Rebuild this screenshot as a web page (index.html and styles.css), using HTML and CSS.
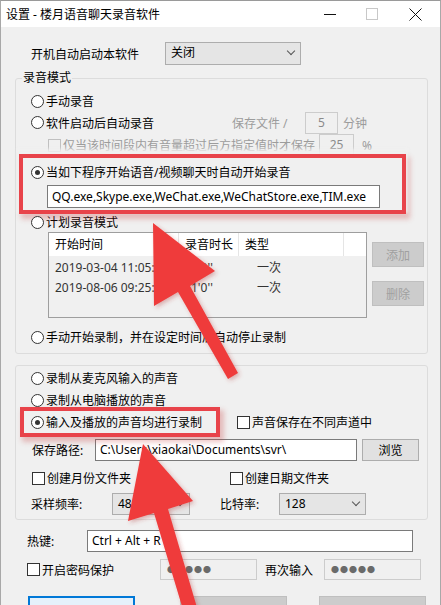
FILE: index.html
```html
<!DOCTYPE html>
<html>
<head>
<meta charset="utf-8">
<title>设置 - 楼月语音聊天录音软件</title>
<link rel="stylesheet" href="styles.css">
</head>
<body>
<div class="window">
  <div class="titlebar">
    <span class="title">设置 - 楼月语音聊天录音软件</span>
    <span class="cap cap-min"></span>
    <span class="cap cap-max"></span>
    <span class="cap cap-close">
      <svg width="13" height="13" viewBox="0 0 13 13"><path d="M0.5 0.5 L12.5 12.5 M12.5 0.5 L0.5 12.5" stroke="#111" stroke-width="1" fill="none"/></svg>
    </span>
  </div>

  <div class="client">
    <div class="row row-auto">
      <span class="lbl-auto">开机自动启动本软件</span>
      <div class="combo combo-auto">关闭<i class="chev"></i></div>
    </div>

    <fieldset class="group group-mode">
      <legend>录音模式</legend>
      <div class="opt opt-first"><span class="radio"></span>手动录音</div>
      <div class="opt opt-save">
        <span class="radio"></span><span class="txt-auto">软件启动后自动录音</span>
        <span class="gray save-lbl">保存文件 /</span>
        <span class="edit edit-dis edit-min">5</span>
        <span class="gray unit">分钟</span>
      </div>
      <div class="opt opt-check">
        <span class="check check-dis"></span><span class="gray txt-only">仅当该时间段内有音量超过后方指定值时才保存</span>
        <span class="edit edit-dis edit-pct">25</span>
        <span class="gray pct">%</span>
      </div>
      <div class="mark mark-chat">
        <div class="opt opt-in"><span class="radio on"></span>当如下程序开始语音/视频聊天时自动开始录音</div>
        <div class="edit edit-apps">QQ.exe,Skype.exe,WeChat.exe,WeChatStore.exe,TIM.exe</div>
      </div>
      <div class="opt opt-plan"><span class="radio"></span>计划录音模式</div>
      <div class="plan">
        <div class="list">
          <div class="list-head">
            <span class="c1">开始时间</span><span class="c2">录音时长</span><span class="c3">类型</span><span class="c4"></span>
          </div>
          <div class="list-row"><span class="c1">2019-03-04 11:05:34</span><span class="c2">1'0''</span><span class="c3">一次</span></div>
          <div class="list-row"><span class="c1">2019-08-06 09:25:36</span><span class="c2">1'0''</span><span class="c3">一次</span></div>
        </div>
        <div class="plan-btns">
          <span class="btn btn-dis">添加</span>
          <span class="btn btn-dis">删除</span>
        </div>
      </div>
      <div class="opt opt-last"><span class="radio"></span>手动开始录制，并在设定时间后自动停止录制</div>
    </fieldset>

    <fieldset class="group group-src">
      <div class="opt opt-mic"><span class="radio"></span>录制从麦克风输入的声音</div>
      <div class="opt"><span class="radio"></span>录制从电脑播放的声音</div>
      <div class="row row-both">
        <div class="mark mark-both"><span class="radio on"></span>输入及播放的声音均进行录制</div>
        <span class="check"></span>声音保存在不同声道中
      </div>
      <div class="row row-path">
        <span class="lbl-path">保存路径:</span>
        <span class="edit edit-path">C:\Users\xiaokai\Documents\svr\</span>
        <span class="btn btn-browse">浏览</span>
      </div>
      <div class="row row-dirs">
        <span class="check"></span><span class="dir-month">创建月份文件夹</span>
        <span class="check"></span>创建日期文件夹
      </div>
      <div class="row row-rate">
        <span class="lbl-rate">采样频率:</span>
        <div class="combo combo-rate">48000<i class="chev"></i></div>
        <span class="lbl-bit">比特率:</span>
        <div class="combo combo-bit">128<i class="chev"></i></div>
      </div>
    </fieldset>

    <div class="row row-hotkey">
      <span class="lbl-hotkey">热键:</span>
      <span class="edit edit-hotkey">Ctrl + Alt + R</span>
    </div>
    <div class="row row-pwd">
      <span class="check"></span><span class="pwd-lbl">开启密码保护</span>
      <span class="edit edit-dis edit-pwd">●●●●●</span>
      <span class="again">再次输入</span>
      <span class="edit edit-dis edit-pwd">●●●●●</span>
    </div>
    <div class="row row-bottom">
      <span class="btn btn-ok"></span>
      <span class="btn btn-dis btn-wide"></span>
      <span class="btn btn-dis btn-wide"></span>
    </div>
  </div>

  <svg class="arrows" width="441" height="605" viewBox="0 0 441 605">
    <defs>
      <filter id="sh" x="-20%" y="-20%" width="140%" height="140%">
        <feDropShadow dx="2" dy="2" stdDeviation="2" flood-color="#b03030" flood-opacity="0.35"/>
      </filter>
    </defs>
    <g fill="#ef3b3b" filter="url(#sh)">
      <polygon points="152,222 214,270 189,285 237,372 227,378 177,291 153,305"/>
      <polygon points="142,443 192,500 167,508 197,610 183,612 153,512 127,520"/>
    </g>
  </svg>
</div>
</body>
</html>
```

FILE: styles.css
```css
body {
    margin: 0;
    background: #fff;
}

.window {
    position: relative;
    width: 441px;
    height: 605px;
    overflow: hidden;
    background: #f0f0f0;
    font-family: "Noto Sans", "Noto Sans CJK SC", sans-serif;
    font-size: 12px;
    color: #000;
    border-top: 1px solid #9a9a9a;
    border-left: 1px solid #a8a8a8;
    border-right: 1px solid #a8a8a8;
    box-sizing: border-box;
}

/* title bar */
.titlebar {
    height: 26px;
    background: #fff;
    display: flex;
    align-items: center;
}
.title {
    padding-left: 5px;
    flex: 1;
}
.cap {
    display: inline-block;
}
.cap-min {
    width: 12px;
    height: 1px;
    background: #111;
    margin-right: 30px;
}
.cap-max {
    width: 10px;
    height: 10px;
    border: 1px solid #c8c8c8;
    margin-right: 31px;
}
.cap-close {
    width: 13px;
    height: 13px;
    margin-right: 18px;
}
.cap-close svg {
    display: block;
}

.client {
    padding: 0 12px 0 14px;
}

.row {
    display: flex;
    align-items: center;
}

.row-auto {
    margin-top: 15px;
    height: 23px;
}
.lbl-auto {
    padding-left: 16px;
    width: 134px;
}

/* combo boxes */
.combo {
    position: relative;
    box-sizing: border-box;
    height: 22px;
    line-height: 20px;
    padding-left: 5px;
    background: #e5e5e5;
    border: 1px solid #adadad;
}
.combo-auto {
    width: 136px;
    height: 23px;
}
.chev {
    position: absolute;
    right: 6px;
    top: 5px;
    width: 5px;
    height: 5px;
    border-right: 1px solid #555;
    border-bottom: 1px solid #555;
    transform: rotate(45deg);
}

/* group boxes */
.group {
    margin: 5px 0 0;
    padding: 0;
    border: 1px solid #dcdcdc;
    border-radius: 3px;
    min-width: 0;
}
.group legend {
    margin-left: 6px;
    padding: 0 1px;
    line-height: 16px;
}
.group-src {
    margin-top: 11px;
    padding-bottom: 4px;
}

.opt {
    display: flex;
    align-items: center;
    height: 20px;
    padding-left: 15px;
}
.opt-first {
    margin-top: 5px;
}
.opt-save {
    height: 23px;
}
.opt-check {
    height: 22px;
    padding-left: 32px;
}
.opt-plan {
    margin-top: 2px;
}
.opt-last {
    margin-top: 9px;
    margin-bottom: 6px;
}
.opt-mic {
    margin-top: 2px;
}
.opt-mic + .opt {
    margin-top: 2px;
}

.radio {
    box-sizing: border-box;
    width: 13px;
    height: 13px;
    border: 1px solid #333;
    border-radius: 50%;
    background: #fff;
    margin-right: 2px;
    flex: none;
    position: relative;
}
.radio.on::after {
    content: "";
    position: absolute;
    left: 3px;
    top: 3px;
    width: 5px;
    height: 5px;
    border-radius: 50%;
    background: #333;
}
.check {
    box-sizing: border-box;
    width: 13px;
    height: 13px;
    border: 1px solid #333;
    background: #fff;
    margin-right: 2px;
    flex: none;
}
.check-dis {
    border-color: #c0c0c0;
    background: #f0f0f0;
}

.gray {
    color: #9c9c9c;
}
.txt-auto {
    width: 186px;
}
.save-lbl {
    width: 73px;
}
.unit {
    margin-left: 5px;
}
.txt-only {
    width: 256px;
}
.pct {
    margin-left: 8px;
}

/* edit boxes */
.edit {
    box-sizing: border-box;
    display: block;
    height: 22px;
    line-height: 20px;
    padding-left: 4px;
    background: #fff;
    border: 1px solid #7a7a7a;
    white-space: nowrap;
    overflow: hidden;
}
.edit-dis {
    background: #f0f0f0;
    border-color: #cccccc;
    color: #8a8a8a;
}
.edit-min {
    width: 33px;
    text-align: center;
    padding-left: 0;
}
.edit-pct {
    width: 35px;
    text-align: center;
    padding-left: 0;
}

/* red marks */
.mark {
    position: relative;
    box-shadow: 0 0 0 4px #e8434a, 0 -3px 3px 6px rgba(240, 240, 240, 0.9), 3px 4px 5px 5px rgba(200, 60, 60, 0.3);
}
.mark-chat {
    margin: 2px 0 0 7px;
    width: 379px;
    padding: 4px 0 2px;
    background: #f0f0f0;
}
.mark-chat .opt-in {
    padding-left: 8px;
}
.edit-apps {
    margin: 3px 0 0 24px;
    width: 333px;
    height: 23px;
    line-height: 21px;
}

/* plan list */
.plan {
    display: flex;
    align-items: flex-start;
    padding-left: 32px;
}
.list {
    box-sizing: border-box;
    width: 319px;
    height: 86px;
    border: 1px solid #9e9e9e;
    background: #f0f0f0;
}
.list-head {
    display: flex;
    height: 23px;
    line-height: 23px;
    background: #fff;
}
.list-head span {
    box-sizing: border-box;
    border-right: 1px solid #e5e5e5;
}
.list-head .c4 {
    border-right: 0;
    flex: 1;
}
.c1, .c2, .c3 {
    padding-left: 6px;
    white-space: nowrap;
    overflow: hidden;
}
.c1 { width: 130px; }
.c2 { width: 60px; }
.c3 { width: 105px; }
.list-row {
    display: flex;
    height: 20px;
    line-height: 20px;
    color: #333;
}
.list-head + .list-row {
    margin-top: 2px;
}
.plan-btns {
    display: flex;
    flex-direction: column;
    margin: 10px 0 0 5px;
    gap: 14px;
}

.btn {
    box-sizing: border-box;
    display: flex;
    align-items: center;
    justify-content: center;
    width: 52px;
    height: 25px;
    background: #e1e1e1;
    border: 1px solid #adadad;
}
.btn-dis {
    background: #cccccc;
    border-color: #bfbfbf;
    color: #a0a0a0;
}

/* source group */
.row-both {
    height: 22px;
    margin-top: 1px;
}
.mark-both {
    display: flex;
    align-items: center;
    margin-left: 8px;
    width: 185px;
    height: 22px;
    padding-left: 7px;
    background: #f0f0f0;
    box-shadow: 0 0 0 4px #e8434a, 3px 4px 5px 5px rgba(200, 60, 60, 0.3);
}
.row-both .check {
    margin-left: 21px;
}
.row-path {
    height: 22px;
    margin-top: 6px;
    padding-left: 16px;
}
.lbl-path {
    width: 63px;
}
.edit-path {
    width: 262px;
}
.btn-browse {
    width: 57px;
    height: 22px;
    margin-left: 5px;
}
.row-dirs {
    height: 20px;
    margin-top: 7px;
    padding-left: 16px;
}
.dir-month {
    width: 183px;
}
.row-rate {
    height: 22px;
    margin-top: 5px;
    padding-left: 15px;
}
.lbl-rate {
    width: 81px;
}
.combo-rate {
    width: 78px;
}
.lbl-bit {
    margin-left: 30px;
    width: 59px;
}
.combo-bit {
    width: 87px;
}

.row-hotkey {
    height: 22px;
    margin-top: 10px;
    padding-left: 12px;
}
.lbl-hotkey {
    width: 60px;
}
.edit-hotkey {
    width: 326px;
}
.row-pwd {
    height: 21px;
    margin-top: 7px;
    padding-left: 12px;
}
.pwd-lbl {
    width: 118px;
}
.edit-pwd {
    width: 97px;
    height: 21px;
    line-height: 19px;
    padding-left: 6px;
    font-size: 8px;
    color: #6a6a6a;
    letter-spacing: 1px;
}
.again {
    margin-left: 8px;
    width: 59px;
}

.row-bottom {
    margin-top: 16px;
    padding-left: 13px;
    align-items: flex-start;
}
.btn-ok {
    width: 107px;
    height: 26px;
    border: 2px solid #0078d7;
    background: #e5f1fb;
}
.btn-wide {
    width: 107px;
    height: 26px;
    margin-left: 45px;
}
.btn-wide + .btn-wide {
    margin-left: 32px;
}

/* annotation arrows */
.arrows {
    position: absolute;
    left: 0;
    top: 0;
    pointer-events: none;
}
```
